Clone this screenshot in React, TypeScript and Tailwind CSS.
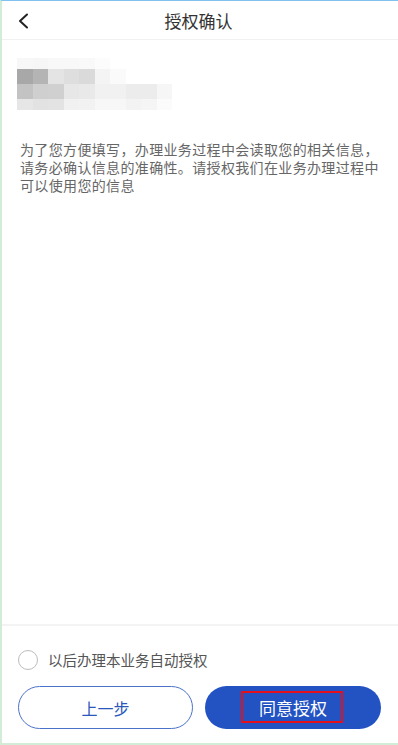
import React from 'react';

const font = { fontFamily: '"Noto Sans CJK SC", "Noto Sans", sans-serif' };

// pixelated (mosaic) block standing in for the masked user name / id
const mosaic: string[][] = [
  ['#f7f7f7', '#f6f6f6', '#f8f8f8', '#f8f8f8', '#f9f9f9', '#fcfcfc', '#ffffff', '#ffffff', '#ffffff', '#ffffff'],
  ['#a8a8a8', '#b4b4b4', '#e4e4e4', '#dedede', '#dadada', '#f4f4f4', '#fafafa', '#ffffff', '#ffffff', '#ffffff'],
  ['#c3c3c3', '#cfcfcf', '#d0d0d0', '#e7e7e7', '#e9e9e9', '#f1f1f1', '#f1f1f1', '#ececec', '#ececec', '#f6f6f6'],
  ['#e6e6e6', '#e2e2e2', '#e3e3e3', '#f1f1f1', '#f2f2f2', '#f7f7f7', '#f7f7f7', '#f3f3f3', '#f5f5f5', '#fbfbfb'],
];

function Mosaic() {
  return (
    <div className="flex flex-col">
      {mosaic.map((row, i) => (
        <div key={i} className={i === 0 || i === 3 ? 'flex h-[11px]' : 'flex h-[15px]'}>
          {row.map((c, j) => (
            <div key={j} className="w-[15.5px] h-full" style={{ backgroundColor: c }} />
          ))}
        </div>
      ))}
    </div>
  );
}

export default function App() {
  return (
    <div
      className="w-[398px] h-[745px] flex flex-col bg-white border-l-2 border-b-2 border-l-[#d3ecd8] border-b-[#d3ecd8] border-t border-t-[#7fc2ef] overflow-hidden"
      style={font}
    >
      <header className="h-[39px] flex items-center relative border-b border-[#f1f1f1] shrink-0">
        <button className="absolute left-[14px] top-[11px] w-[14px] h-[18px] flex items-center justify-center">
          <svg width="12" height="16" viewBox="0 0 12 16" fill="none">
            <path d="M10 1.5L3 8l7 6.5" stroke="#222" strokeWidth="2" strokeLinecap="round" strokeLinejoin="round" />
          </svg>
        </button>
        <h1 className="flex-1 text-center text-[17px] text-[#333] leading-none pr-[3px]">授权确认</h1>
      </header>

      <main className="flex-1 flex flex-col">
        <div className="pl-[15px] pt-[18px] blur-[0.6px]">
          <Mosaic />
        </div>
        <p className="mt-[30px] pl-[18px] pr-[10px] text-[14px] tracking-[0.35px] leading-[18px] text-[#666]">
          为了您方便填写，办理业务过程中会读取您的相关信息，
          <br />
          请务必确认信息的准确性。请授权我们在业务办理过程中
          <br />
          可以使用您的信息
        </p>
      </main>

      <footer className="shrink-0 border-t-2 border-[#f3f3f3] pt-[24px] pb-[14px] px-[16px]">
        <label className="flex items-center h-[20px]">
          <span className="w-[20px] h-[20px] rounded-full border border-[#bcbcbc] bg-white" />
          <span className="ml-[10px] text-[14.5px] text-[#555] leading-none">以后办理本业务自动授权</span>
        </label>
        <div className="mt-[16px] flex gap-[12px] pr-[1px]">
          <button className="w-[176px] h-[43px] rounded-full border border-[#4b72c9] text-[#2b57bb] text-[16px] bg-white">
            上一步
          </button>
          <button className="relative w-[177px] h-[43px] rounded-full bg-[#2352c3] text-white text-[17px]">
            同意授权
            <span className="absolute left-[36px] top-[5px] w-[102px] h-[32px] border-2 border-[#e5101b] pointer-events-none" />
          </button>
        </div>
      </footer>
    </div>
  );
}
